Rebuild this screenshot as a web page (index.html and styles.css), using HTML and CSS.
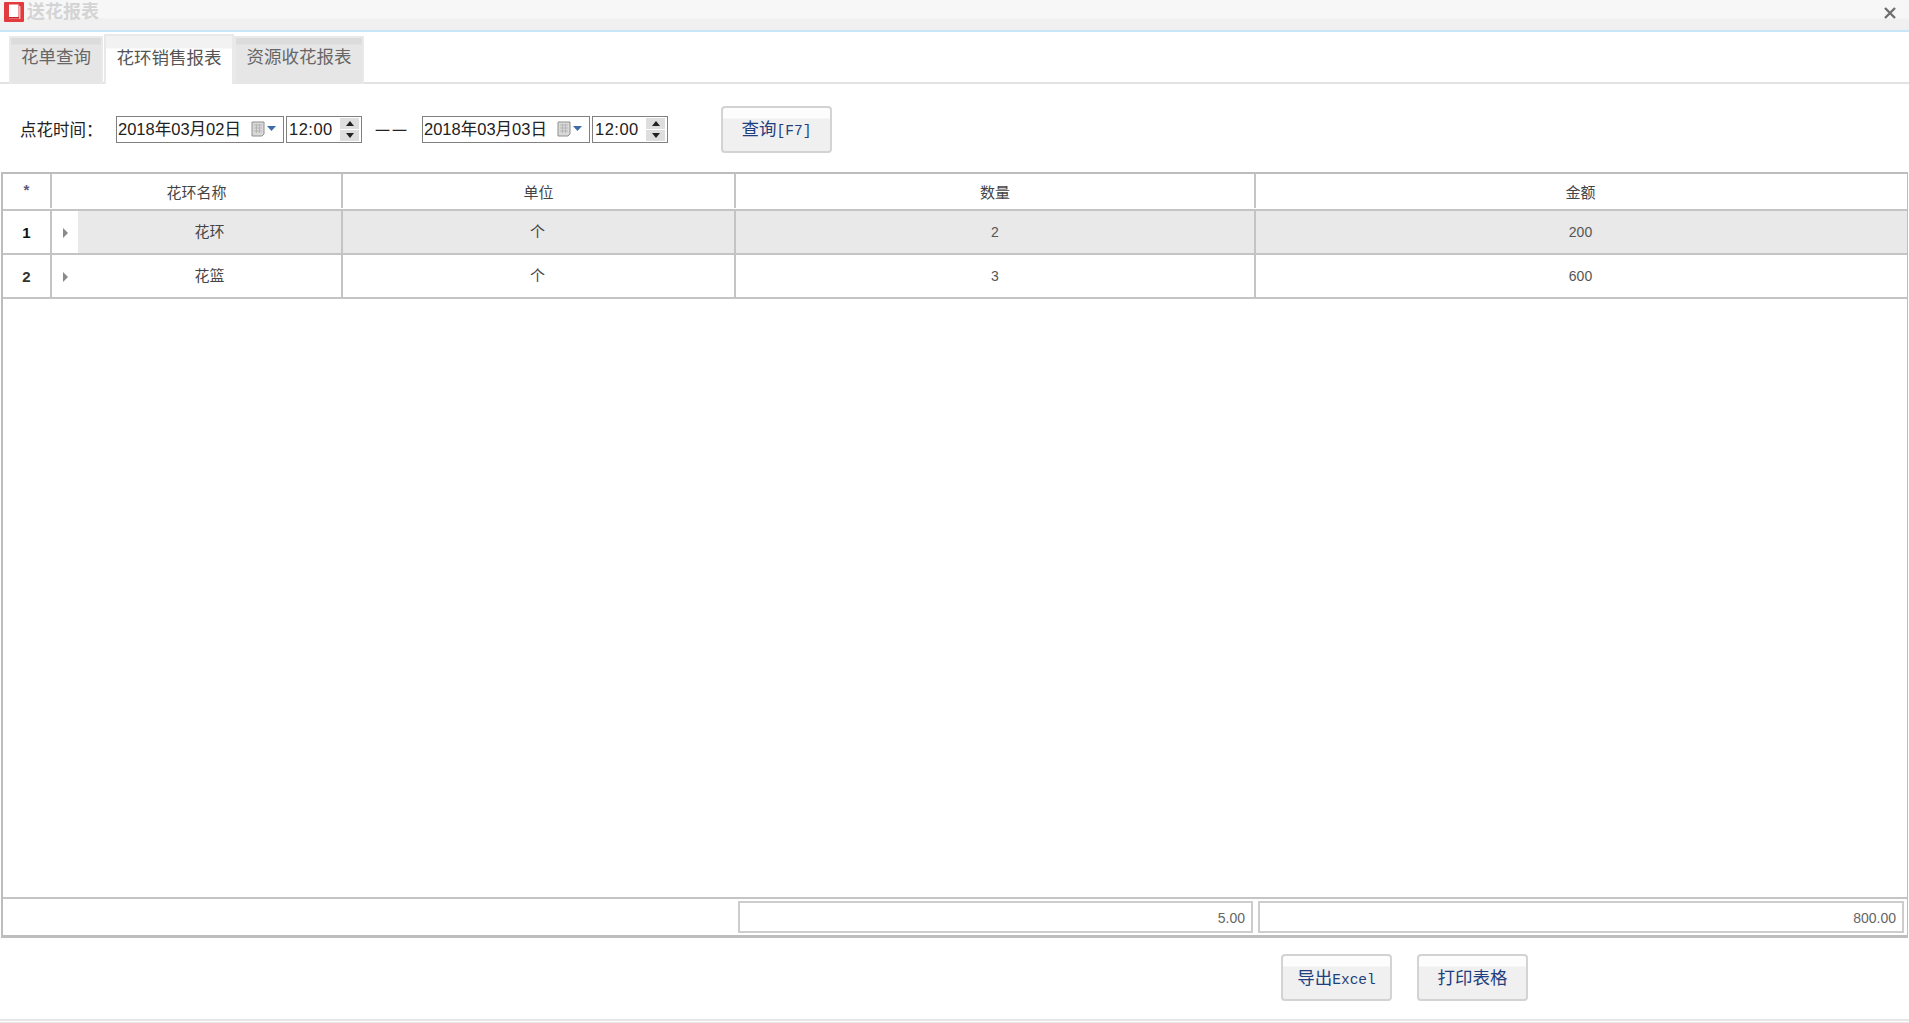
FILE: index.html
```html
<!DOCTYPE html>
<html lang="zh-CN">
<head>
<meta charset="utf-8">
<title>送花报表</title>
<link rel="stylesheet" href="styles.css">
</head>
<body>
<div class="window">
  <header class="titlebar">
    <svg class="app-icon" viewBox="0 0 20 20" width="20" height="20">
      <rect width="20" height="20" rx="1" fill="#e33a3f"/>
      <path d="M5 2.5h9.5v12.5H5z" fill="#fff"/>
      <path d="M15 4h1.5v13H5v-1.2h10z" fill="#f3b6b6"/>
      <path d="M5 15h10v1.5H5z" fill="#c9252b"/>
    </svg>
    <span class="title-text">送花报表</span>
    <svg class="close-icon" viewBox="0 0 12 12" width="12" height="12">
      <path d="M1 1l10 10M11 1L1 11" stroke="#6f6f6f" stroke-width="2.4" fill="none"/>
    </svg>
  </header>

  <nav class="tabs">
    <div class="tab">花单查询</div>
    <div class="tab tab-active">花环销售报表</div>
    <div class="tab tab-last">资源收花报表</div>
  </nav>

  <section class="filter">
    <span class="filter-label">点花时间：</span>
    <div class="date-box">
      <span class="date-value">2018年03月02日</span>
      <svg class="cal-icon" viewBox="0 0 26 16" width="26" height="16">
        <path d="M1 1h12v12l-2 2H1z" fill="#d9d9d9" stroke="#8f8f8f"/>
        <path d="M3 4h8M3 7h8M3 10h8M5.500 3v9M8.500 3v9" stroke="#b5b5b5" fill="none"/>
        <path d="M16 5h9l-4.500 5z" fill="#3d6da6"/>
      </svg>
    </div>
    <div class="time-box">
      <span class="time-value">12:00</span>
      <div class="spinner"><span class="spin-up"></span><span class="spin-down"></span></div>
    </div>
    <span class="range-dash">一一</span>
    <div class="date-box">
      <span class="date-value">2018年03月03日</span>
      <svg class="cal-icon" viewBox="0 0 26 16" width="26" height="16">
        <path d="M1 1h12v12l-2 2H1z" fill="#d9d9d9" stroke="#8f8f8f"/>
        <path d="M3 4h8M3 7h8M3 10h8M5.500 3v9M8.500 3v9" stroke="#b5b5b5" fill="none"/>
        <path d="M16 5h9l-4.500 5z" fill="#3d6da6"/>
      </svg>
    </div>
    <div class="time-box">
      <span class="time-value">12:00</span>
      <div class="spinner"><span class="spin-up"></span><span class="spin-down"></span></div>
    </div>
    <button class="btn btn-query" type="button">查询<span class="mono">[F7]</span></button>
  </section>

  <section class="grid-panel">
    <div class="grid-table">
      <div class="row row-head">
        <div class="cell cell-index star">*</div>
        <div class="cell">花环名称</div>
        <div class="cell">单位</div>
        <div class="cell">数量</div>
        <div class="cell cell-end">金额</div>
      </div>
      <div class="row row-selected">
        <div class="cell cell-index"><b>1</b></div>
        <div class="cell cell-name">
          <span class="expander"><i class="caret"></i></span>
          <span class="name-text">花环</span>
        </div>
        <div class="cell cell-unit">个</div>
        <div class="cell cell-num">2</div>
        <div class="cell cell-end cell-num">200</div>
      </div>
      <div class="row">
        <div class="cell cell-index"><b class="soft">2</b></div>
        <div class="cell cell-name">
          <span class="expander"><i class="caret"></i></span>
          <span class="name-text">花篮</span>
        </div>
        <div class="cell cell-unit">个</div>
        <div class="cell cell-num">3</div>
        <div class="cell cell-end cell-num">600</div>
      </div>
    </div>
    <div class="grid-empty"></div>
    <div class="grid-footer">
      <div class="sum-box sum-qty">5.00</div>
      <div class="sum-box sum-amount">800.00</div>
    </div>
  </section>

  <footer class="actions">
    <button class="btn" type="button">导出<span class="mono">Excel</span></button>
    <button class="btn" type="button">打印表格</button>
  </footer>

  <div class="status-strip"></div>
</div>
</body>
</html>
```

FILE: styles.css
```css
* { box-sizing: border-box; }

html, body {
  margin: 0;
  height: 100%;
  overflow: hidden;
  background: #fff;
}

body {
  font-family: "Liberation Sans", "Noto Sans CJK SC", sans-serif;
  color: #333;
}

.window {
  display: flex;
  flex-direction: column;
  height: 1023px;
}

/* Title bar */
.titlebar {
  flex: 0 0 32px;
  display: flex;
  align-items: flex-start;
  padding: 2px 12px 0 4px;
  background: linear-gradient(#f7f7f7 0, #f7f7f7 18px, #f0f0f0 19px, #f0f0f0 100%);
  border-bottom: 2px solid #c8e6f8;
}

.title-text {
  margin-left: 3px;
  font-size: 18px;
  line-height: 20px;
  font-weight: 700;
  color: #d4d4d4;
}

.close-icon {
  margin: 5px 1px 0 auto;
}

/* Tabs */
.tabs {
  flex: 0 0 50px;
  display: flex;
  align-items: flex-end;
  padding: 2px 0 0 9px;
  border-bottom: 2px solid #e2e2e2;
}

.tab {
  width: 94px;
  height: 48px;
  margin-bottom: -2px;
  border: 2px solid #e9e9e9;
  border-bottom: 0;
  background: linear-gradient(#dcdcdc 0, #dcdcdc 6px, #e6e6e6 7px, #e6e6e6 100%);
  color: #666;
  font-size: 17.500px;
  line-height: 38px;
  text-align: center;
}

.tab-active {
  width: 130px;
  height: 50px;
  margin-left: 1px;
  background: linear-gradient(#f2f2f2 0, #f2f2f2 12px, #fff 13px);
  color: #555;
  line-height: 44px;
}

.tab-last {
  width: 130px;
}

/* Date filter */
.filter {
  flex: 0 0 88px;
  display: flex;
  align-items: center;
  padding: 2px 0 0 20px;
  font-size: 16px;
  color: #222;
}

.filter-label {
  width: 96px;
  font-family: "Noto Sans CJK TC", sans-serif;
  font-size: 16.500px;
}

.date-box,
.time-box {
  display: flex;
  align-items: center;
  height: 27px;
  border: 1px solid #808080;
  background: #fff;
  line-height: 25px;
  font-size: 16.500px;
  color: #222;
}

.date-box {
  width: 168px;
  padding-left: 1px;
}

.cal-icon {
  margin-left: auto;
  margin-right: 6px;
}

.time-box {
  width: 76px;
  margin-left: 2px;
  padding-left: 2px;
}

.time-value {
  letter-spacing: 0.500px;
}

.spinner {
  display: flex;
  flex-direction: column;
  gap: 1px;
  width: 19px;
  height: 23px;
  margin-left: auto;
  margin-right: 2px;
}

.spin-up,
.spin-down {
  flex: 1;
  display: flex;
  align-items: center;
  justify-content: center;
  background: #dedede;
}

.spin-up::after,
.spin-down::after {
  content: "";
  border-left: 4px solid transparent;
  border-right: 4px solid transparent;
}

.spin-up::after { border-bottom: 5px solid #222; }
.spin-down::after { border-top: 5px solid #222; }

.range-dash {
  width: 60px;
  text-align: center;
  font-size: 15px;
  letter-spacing: 2px;
  color: #222;
}

/* Buttons */
.btn {
  width: 111px;
  height: 47px;
  padding: 2px 0 0;
  border: 2px solid #d3d3d3;
  border-radius: 4px;
  background: linear-gradient(#fdfdfd 0, #fdfdfd 10px, #f0f0f0 11px, #f0f0f0 100%);
  color: #1f3f7f;
  font-family: inherit;
  font-size: 17.500px;
  line-height: 1;
}

.btn-query {
  margin-left: 53px;
}

.mono {
  font-family: "Liberation Mono", monospace;
  font-size: 14.500px;
}

/* Data grid */
.grid-panel {
  flex: 0 0 766px;
  display: flex;
  flex-direction: column;
  margin: 0 1px;
  border: solid #bdbdbd;
  border-width: 2px 1px 3px 2px;
}

.grid-table {
  display: flex;
  flex-direction: column;
}

.row {
  display: grid;
  grid-template-columns: 49px 291px 393px 520px 1fr;
  height: 44px;
  border-bottom: 2px solid #c4c4c4;
}

.row-head {
  height: 37px;
  padding-bottom: 1px;
}

.row-selected .cell {
  background: #e9e9e9;
}

.cell {
  display: flex;
  align-items: center;
  justify-content: center;
  border-right: 2px solid #c4c4c4;
  font-size: 15px;
  color: #444;
}

.row-selected .cell-index,
.cell-index {
  background: #fff;
  color: #111;
  font-size: 15px;
}

.star {
  align-items: flex-start;
  padding-top: 7px;
  color: #5a5a7a;
  font-size: 15px;
  font-weight: 700;
}

.soft {
  color: #333;
}

.cell-num {
  font-size: 14px;
  color: #555;
}

.cell-end {
  border-right: 0;
  padding-right: 2px;
}

.cell-unit {
  padding: 0 2px 3px 0;
}

.row-selected .cell-name,
.cell-name {
  justify-content: flex-start;
  background: transparent;
}

.expander {
  flex: 0 0 26px;
  align-self: stretch;
  display: flex;
  align-items: center;
  justify-content: center;
  background: #fff;
}

.caret {
  display: block;
  margin-top: 1px;
  border-top: 5px solid transparent;
  border-bottom: 5px solid transparent;
  border-left: 5px solid #8a8a8a;
}

.name-text {
  flex: 1;
  align-self: stretch;
  padding-top: 9px;
  text-align: center;
}

.row-selected .name-text {
  background: #e9e9e9;
}

.grid-empty {
  flex: 1;
}

.grid-footer {
  flex: 0 0 38px;
  display: flex;
  align-items: center;
  justify-content: flex-end;
  gap: 5px;
  padding-right: 3px;
  border-top: 2px solid #c4c4c4;
}

.sum-box {
  height: 32px;
  padding-right: 6px;
  border: 2px solid #cdcdcd;
  font-size: 14px;
  line-height: 30px;
  text-align: right;
  color: #666;
}

.sum-qty { width: 515px; }
.sum-amount { width: 646px; }

/* Bottom actions */
.actions {
  flex: 0 0 81px;
  display: flex;
  align-items: center;
  gap: 25px;
  padding: 0 0 2px 1281px;
}

.status-strip {
  flex: 1;
  border-top: 2px solid #e6e6e6;
  border-bottom: 1px solid #e6e6e6;
}
```
